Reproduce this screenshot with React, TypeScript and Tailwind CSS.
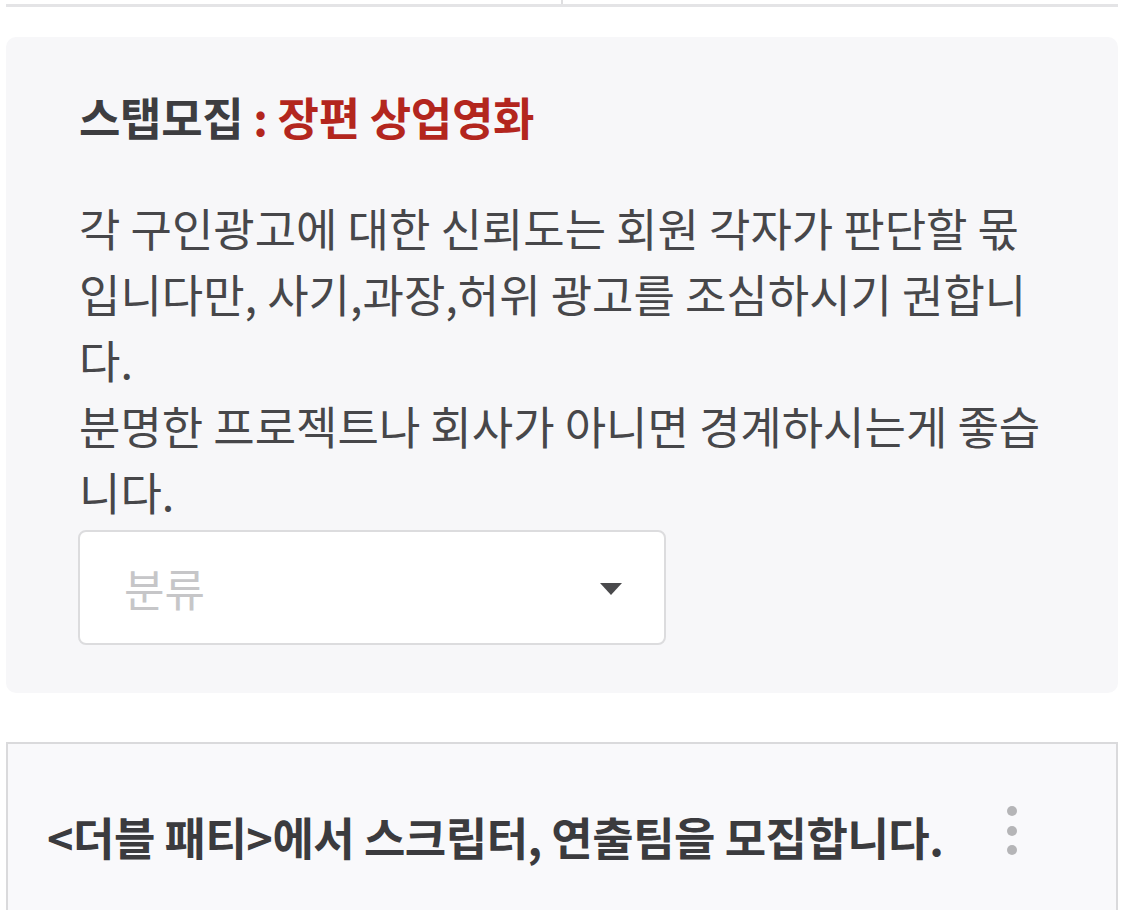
import React from 'react';

const font = { fontFamily: '"Noto Sans CJK KR", "Noto Sans", sans-serif' };

function KebabDots() {
  return (
    <div className="flex flex-col items-center gap-[9.5px] pt-[2px]">
      <span className="block w-[10px] h-[10px] rounded-full bg-[#b5b5b7]" />
      <span className="block w-[10px] h-[10px] rounded-full bg-[#b5b5b7]" />
      <span className="block w-[10px] h-[10px] rounded-full bg-[#b5b5b7]" />
    </div>
  );
}

export default function App() {
  return (
    <div className="w-[1124px] h-[910px] overflow-hidden bg-white" style={font}>
      {/* cut-off tab bar at the top */}
      <div className="mx-[6px] flex h-[7px] border-b-[3px] border-[#e4e4e6]">
        <div className="flex-1 border-r-2 border-[#dedee0]" />
        <div className="flex-1" />
      </div>

      {/* notice panel */}
      <section className="mx-[6px] mt-[30px] rounded-[10px] bg-[#f7f7f9] pl-[73px] pr-[66px] pt-[47px] pb-[48px]">
        <h2 className="text-[45px] leading-[66px] font-bold text-[#3d3d40] tracking-[-0.3px]">
          스탭모집 <span className="text-[#b3261e]">: 장편 상업영화</span>
        </h2>
        <p className="mt-[45px] text-[45px] leading-[66px] text-[#47474a] break-all">
          각 구인광고에 대한 신뢰도는 회원 각자가 판단할 몫입니다만, 사기,과장,허위 광고를 조심하시기 권합니다.
          <br />
          분명한 프로젝트나 회사가 아니면 경계하시는게 좋습니다.
        </p>
        <button
          type="button"
          className="mt-[5px] ml-[-1px] flex h-[115px] w-[588px] items-center justify-between rounded-[8px] border-2 border-[#dcdcde] bg-white pl-[44px] pr-[42px]"
        >
          <span className="text-[44px] text-[#c6c6c8]">분류</span>
          <svg width="22" height="12" viewBox="0 0 22 12" className="mt-[2px]">
            <path d="M0 0h22L11 12z" fill="#4a4a4c" />
          </svg>
        </button>
      </section>

      {/* post card */}
      <article className="mx-[6px] mt-[49px] h-[300px] border-x-2 border-t-2 border-[#dadadc] bg-[#f9f9fb] pl-[39px] pr-[99px] pt-[60px]">
        <div className="flex items-start justify-between">
          <h3 className="text-[45px] leading-[66px] font-bold text-[#3b3b3e] tracking-[-0.5px]">
            &lt;더블 패티&gt;에서 스크립터, 연출팀을 모집합니다.
          </h3>
          <KebabDots />
        </div>
      </article>
    </div>
  );
}
